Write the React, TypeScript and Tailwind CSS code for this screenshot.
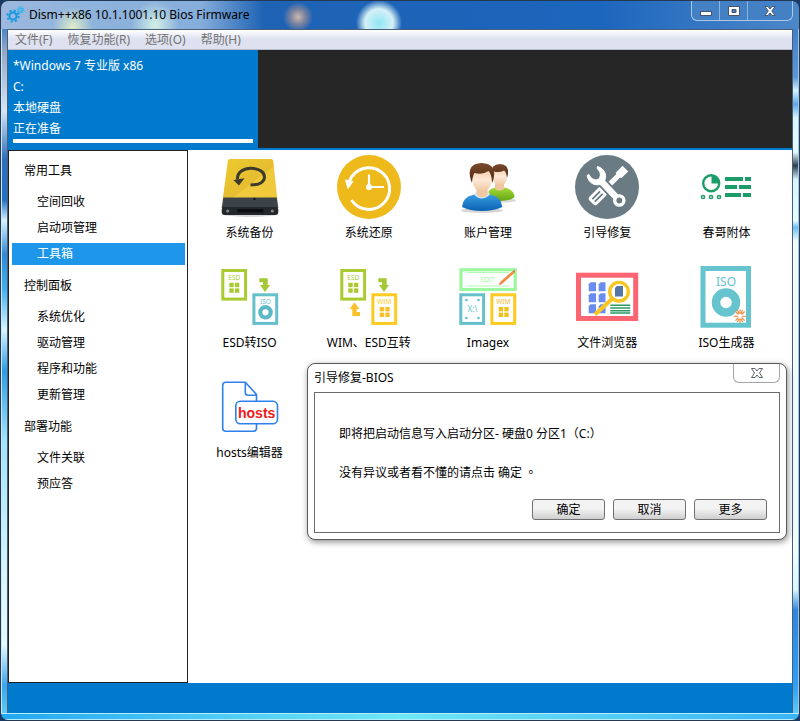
import type { ReactNode } from "react";

const windowMenus = ["文件(F)", "恢复功能(R)", "选项(O)", "帮助(H)"];

const sections = [
  { title: "常用工具", items: ["空间回收", "启动项管理", "工具箱"] },
  { title: "控制面板", items: ["系统优化", "驱动管理", "程序和功能", "更新管理"] },
  { title: "部署功能", items: ["文件关联", "预应答"] },
];

function Icon({ children }: { children: ReactNode }) {
  return (
    <svg className="size-16" viewBox="0 0 64 64" fill="none" aria-hidden="true">
      {children}
    </svg>
  );
}

function Panes({ x, y, color }: { x: number; y: number; color: string }) {
  return (
    <g fill={color}>
      <rect x={x} y={y} width="4.4" height="4.4" />
      <rect x={x + 5.6} y={y} width="4.4" height="4.4" />
      <rect x={x} y={y + 5.6} width="4.4" height="4.4" />
      <rect x={x + 5.6} y={y + 5.6} width="4.4" height="4.4" />
    </g>
  );
}

function Tile({ x, y, color, label, labelColor, children }: { x: number; y: number; color: string; label?: string; labelColor?: string; children?: ReactNode }) {
  return (
    <g>
      <rect x={x + 1.5} y={y + 1.5} width="22.8" height="28.6" fill="#fff" stroke={color} strokeWidth="3" />
      {label && (
        <text x={x + 13} y={y + 10.5} textAnchor="middle" fontSize="6.5" fontFamily="Noto Sans, sans-serif" fill={labelColor ?? color}>
          {label}
        </text>
      )}
      {children}
    </g>
  );
}

function GreenTurnArrow() {
  return <path d="M41.3 13.3H49.7V20H52L47 27L42 20H45V17.3H41.3Z" fill="#a4c935" />;
}

function BackupIcon() {
  return (
    <Icon>
      <defs>
        <linearGradient id="diskTop" x1="0" y1="0" x2="1" y2="1">
          <stop offset="0" stopColor="#ecca2e" />
          <stop offset="0.55" stopColor="#e6bd31" />
          <stop offset="0.56" stopColor="#efca3c" />
          <stop offset="1" stopColor="#f0c93a" />
        </linearGradient>
      </defs>
      <ellipse cx="32" cy="59" rx="28" ry="3" fill="#000" opacity="0.15" />
      <path d="M12 4H53Q55 4 55.3 6L59.5 46H4.5L9.8 6Q10 4 12 4Z" fill="url(#diskTop)" />
      <path d="M5.3 42.5H58.8L60.3 53H3.7Z" fill="#3c4348" />
      <rect x="3.7" y="52" width="56.6" height="8" rx="3" fill="#23282c" />
      <rect x="19.5" y="54" width="26" height="3.5" fill="#0c0e10" />
      <circle cx="9.7" cy="56" r="1.5" fill="#858a8d" />
      <circle cx="54.3" cy="56" r="1.5" fill="#858a8d" />
      <circle cx="36.5" cy="44" r="1.2" fill="#15191c" />
      <path d="M19.5 24.5C19 17 26 13.3 33 13.3C41 13.3 46.500 17 46.500 22C46.500 27 41 30 32.500 30" stroke="#3d3a2b" strokeWidth="3" />
      <path d="M15.300 25L26.500 23.300L21 30.500Z" fill="#3d3a2b" />
    </Icon>
  );
}

function RestoreIcon() {
  return (
    <Icon>
      <circle cx="32" cy="32" r="32" fill="#edb91b" />
      <path d="M12.500 26A20.800 20.800 0 1 1 14.500 45" stroke="#fff" strokeWidth="3" />
      <path d="M8.500 25L16 26.500L11 33.500Z" fill="#fff" stroke="#fff" />
      <path d="M32 19.500V32H47" stroke="#fff" strokeWidth="2.200" />
      <circle cx="32" cy="32" r="3" fill="#fff" />
    </Icon>
  );
}

function AccountsIcon() {
  return (
    <Icon>
      <defs>
        <linearGradient id="shirtBlue" x1="0" y1="0" x2="0" y2="1">
          <stop offset="0" stopColor="#3a9be0" />
          <stop offset="1" stopColor="#0a62b3" />
        </linearGradient>
        <linearGradient id="shirtGreen" x1="0" y1="0" x2="0" y2="1">
          <stop offset="0" stopColor="#a6da35" />
          <stop offset="1" stopColor="#63a616" />
        </linearGradient>
        <linearGradient id="skin" x1="0" y1="0" x2="0" y2="1">
          <stop offset="0" stopColor="#f1c9a3" />
          <stop offset="0.5" stopColor="#fde9d6" />
          <stop offset="1" stopColor="#f0c39c" />
        </linearGradient>
        <linearGradient id="hair" x1="0" y1="0" x2="0" y2="1">
          <stop offset="0" stopColor="#7b4a2a" />
          <stop offset="1" stopColor="#4f2a16" />
        </linearGradient>
      </defs>
      <ellipse cx="46" cy="45.500" rx="14" ry="2" fill="#000" opacity="0.15" />
      <path d="M30 44Q31 34 39 32.500H48Q57.500 34 58.700 42Q54 46 44 46Q34 46 30 44Z" fill="url(#shirtGreen)" />
      <path d="M39 27H48V34Q43.500 37 39 34Z" fill="#f0c6a0" />
      <ellipse cx="44" cy="21.500" rx="7" ry="9.500" fill="url(#skin)" />
      <path d="M35.700 19Q34.500 9 44 9Q53 9 52 19L51 23Q50.500 17 48 15.500Q43 18 38 16.500L37 23Z" fill="url(#hair)" />
      <ellipse cx="26" cy="55.500" rx="21" ry="2.500" fill="#000" opacity="0.16" />
      <path d="M6 52Q6.500 42 18 39.500H34Q45.500 42 46.400 52Q38 56 26 56Q14 56 6 52Z" fill="url(#shirtBlue)" />
      <path d="M18 39.500Q25.500 47.500 34 39.500L32 36H20Z" fill="#d4e9f8" />
      <path d="M20.500 33H31.500V40Q26 45 20.500 40Z" fill="#f2c9a4" />
      <ellipse cx="26" cy="25" rx="9.500" ry="11.800" fill="url(#skin)" />
      <path d="M14.800 25Q10 8.500 25.500 8Q41.500 8.500 37.300 25L36 28Q36 20 32.500 16Q27 20 18.500 18Q16.500 21 16 28Z" fill="url(#hair)" />
    </Icon>
  );
}

function RepairIcon() {
  return (
    <Icon>
      <circle cx="32" cy="32" r="32" fill="#6b7b83" />
      <g transform="rotate(45 32 32)">
        <rect x="29.500" y="10" width="5" height="19" fill="#fff" />
        <path d="M28 6H36V15L34 17H30L28 15Z" fill="#fff" />
        <rect x="26.500" y="36" width="11" height="18" rx="3" fill="#fff" />
        <path d="M30.200 40V51M33.800 40V51" stroke="#6b7b83" strokeWidth="1.700" />
      </g>
      <path d="M25 25L43 44" stroke="#6b7b83" strokeWidth="10" />
      <path d="M25 25L42 43" stroke="#fff" strokeWidth="6.500" />
      <path d="M22.500 11.500C30 13.500 33 21.500 28.500 27.500C22 32.500 13.500 29 12 20.500L14 19.500C16 24 19.500 25.500 23 24.500C26.500 22 26 16.500 22 13.500Z" fill="#fff" stroke="#fff" />
      <circle cx="44.300" cy="45.500" r="4.600" fill="#6b7b83" stroke="#fff" strokeWidth="3.400" />
    </Icon>
  );
}

function ChunGeIcon() {
  return (
    <Icon>
      <g stroke="#1b9c68">
        <circle cx="17.200" cy="28.200" r="8" strokeWidth="2.400" />
        <circle cx="9" cy="42" r="1.600" strokeWidth="1.500" />
        <circle cx="17" cy="42" r="1.600" strokeWidth="1.500" />
        <circle cx="25" cy="42" r="1.600" strokeWidth="1.500" />
      </g>
      <path d="M17.500 28.500V20A8.500 8.500 0 0 1 26 28.500Z" fill="#1b9c68" />
      <path d="M31 22H49V26H31ZM51 22H57V26H51ZM31 30H43V34H31ZM45 30H57V34H45ZM31 38H47V42H31ZM49 38H57V42H49Z" fill="#1b9c68" />
    </Icon>
  );
}

function EsdToIsoIcon() {
  return (
    <Icon>
      <Tile x={3.300} y={4} color="#a9cb2f" label="ESD">
        <Panes x={11.300} y={17.800} color="#a9cb2f" />
      </Tile>
      <GreenTurnArrow />
      <Tile x={34.400} y={28.300} color="#65c0cb" label="ISO">
        <circle cx="47.500" cy="47.300" r="5.200" stroke="#5bb9c7" strokeWidth="4.200" />
      </Tile>
    </Icon>
  );
}

function WimEsdIcon() {
  return (
    <Icon>
      <Tile x={3.300} y={4} color="#a9cb2f" label="ESD">
        <Panes x={11.300} y={17.800} color="#a9cb2f" />
      </Tile>
      <GreenTurnArrow />
      <path d="M17.500 37.500L22.500 44H19.700V47H23V51H15.300V44H12.500Z" fill="#fbc02a" />
      <Tile x={34.400} y={28.300} color="#fccb21" label="WIM">
        <Panes x={42.700} y={42} color="#fbc02a" />
      </Tile>
    </Icon>
  );
}

function ImagexIcon() {
  return (
    <Icon>
      <rect x="5" y="4.800" width="54.200" height="19.700" fill="#fff" stroke="#9df79f" strokeWidth="3.200" />
      <path d="M11 7.500H53M11 21H53" stroke="#9df79f" strokeWidth="0.800" />
      <text x="31.500" y="17" textAnchor="middle" fontSize="6.500" fontFamily="Noto Sans, sans-serif" fill="#9df79f">EDIT</text>
      <path d="M45 18L57.500 7" stroke="#f08a3e" strokeWidth="2.600" />
      <path d="M43 20L44 17L46 19ZM56.500 6L59 5L58.500 8Z" fill="#e5674e" />
      <Tile x={3.300} y={28.300} color="#65c0cb">
        <text x="16.500" y="47" textAnchor="middle" fontSize="8" fontFamily="Noto Sans, sans-serif" fill="#65c0cb">X:\</text>
        <g fill="#65c0cb">
          <circle cx="10.500" cy="35" r="1.300" />
          <circle cx="22.500" cy="35" r="1.300" />
          <circle cx="10.500" cy="53" r="1.300" />
          <circle cx="22.500" cy="53" r="1.300" />
        </g>
      </Tile>
      <Tile x={34.400} y={28.300} color="#fccb21" label="WIM" labelColor="#f5b72b">
        <Panes x={42.700} y={42} color="#f0c020" />
      </Tile>
    </Icon>
  );
}

function FileBrowserIcon() {
  return (
    <Icon>
      <rect x="3.500" y="10.200" width="57.200" height="43.300" fill="#fff" stroke="#fb6672" strokeWidth="5" />
      <g fill="#6a8cf0">
        {[17.300, 28.300, 39.300].map((y) => (
          <g key={y}>
            <path d={`M15.500 ${y}H21V${y + 9}H13.700V${y + 2}Z`} />
            <path d={`M25.700 ${y}H30.500V${y + 9}H23.700V${y + 2}Z`} />
          </g>
        ))}
      </g>
      <path d="M35.300 40.200H55.300M35.300 43H55.300M35.300 45.800H55.300M35.300 48H55.300" stroke="#2d9a64" strokeWidth="1.400" />
      <path d="M37.500 33.500L20 49.500" stroke="#f8c623" strokeWidth="4.200" />
      <circle cx="44" cy="26.700" r="9.300" fill="#fff" stroke="#f8c623" strokeWidth="3.400" />
      <path d="M42 21H48V31.500H40V23Z" fill="#5577a8" />
    </Icon>
  );
}

function IsoMakerIcon() {
  return (
    <Icon>
      <rect x="9" y="3.500" width="45.500" height="56.700" fill="#fff" stroke="#65c4cd" strokeWidth="5" />
      <text x="32" y="20.500" textAnchor="middle" fontSize="12" fontFamily="Noto Sans, sans-serif" fill="#65bfcf">ISO</text>
      <circle cx="32" cy="37.500" r="10" stroke="#65c4cd" strokeWidth="8.500" />
      <circle cx="46" cy="51" r="6" fill="#fff" />
      <path d="M46 44.500V49M46 53.500V58M39.500 51.200H44M48 51.200H52.500M41.500 46.500L44.500 49.500M47.500 52.500L50.700 55.700M50.700 46.500L47.500 49.500M44.500 52.500L41.500 55.700M43.500 45L45 48.500M48.500 45L47 48.500M43.500 57L45 54M48.500 57L47 54" stroke="#ed8a3a" strokeWidth="1.100" />
    </Icon>
  );
}

function HostsIcon() {
  return (
    <Icon>
      <path d="M27.300 7.300H8Q4.700 7.300 4.700 10.500V53.200Q4.700 56.200 8 56.200H35.500Q38.500 56.200 38.500 53V19.500L27.300 7.300V17.500Q27.300 20.300 30 20.300H38.500" fill="#fff" stroke="#2f80ed" strokeWidth="1.600" strokeLinejoin="round" />
      <rect x="17.800" y="26.300" width="41.700" height="22.500" rx="4.500" fill="#fff" stroke="#2f80ed" strokeWidth="1.600" />
      <text x="38.700" y="42.500" textAnchor="middle" fontSize="14" fontWeight="700" fontFamily="Liberation Sans, sans-serif" fill="#f01818">hosts</text>
    </Icon>
  );
}

const tools = [
  { label: "系统备份", icon: <BackupIcon /> },
  { label: "系统还原", icon: <RestoreIcon /> },
  { label: "账户管理", icon: <AccountsIcon /> },
  { label: "引导修复", icon: <RepairIcon /> },
  { label: "春哥附体", icon: <ChunGeIcon /> },
  { label: "ESD转ISO", icon: <EsdToIsoIcon /> },
  { label: "WIM、ESD互转", icon: <WimEsdIcon /> },
  { label: "Imagex", icon: <ImagexIcon /> },
  { label: "文件浏览器", icon: <FileBrowserIcon /> },
  { label: "ISO生成器", icon: <IsoMakerIcon /> },
  { label: "hosts编辑器", icon: <HostsIcon /> },
];

function TitleBar() {
  return (
    <header className="flex h-7 shrink-0 items-start justify-between bg-[radial-gradient(circle_at_297px_16px,#c9b9ae_0,#75809f_8px,transparent_15px),radial-gradient(circle_at_378px_22px,#8fe6f5_0,#d5f0f5_14px,transparent_23px),radial-gradient(circle_at_72px_26px,#dfeec8_0,transparent_20px),radial-gradient(circle_at_154px_24px,#d3f0e6_0,transparent_24px),linear-gradient(to_right,#9db8de,#8fb4dd_10%,#86aedb_25%,#1e62b4_33%,#1c66bd_75%,#4c87c8)] pl-1">
      <div className="flex items-center gap-1 pt-1">
        <svg className="size-5" viewBox="0 0 20 20" fill="none" aria-hidden="true">
          <circle cx="8" cy="11" r="3.600" stroke="#1e9ae0" strokeWidth="2.200" />
          <circle cx="8" cy="11" r="5.600" stroke="#1e9ae0" strokeWidth="2" strokeDasharray="2.200 2.200" />
          <circle cx="15.500" cy="5" r="1.800" stroke="#35b3ee" strokeWidth="1.500" />
          <circle cx="15.500" cy="5" r="3.200" stroke="#35b3ee" strokeWidth="1.300" strokeDasharray="1.300 1.200" />
        </svg>
        <h1 className="text-xs leading-5 text-black">Dism++x86 10.1.1001.10 Bios Firmware</h1>
      </div>
      <div className="mr-[6px] flex h-5 overflow-hidden rounded-b-md border border-t-0 border-[#a9c8ea] bg-[#4480c4] text-white">
        <button type="button" aria-label="最小化" className="flex w-7 items-center justify-center border-r border-[#8fb4dd]">
          <svg className="h-4 w-4" viewBox="0 0 16 16"><rect x="2.500" y="8.500" width="11" height="4" fill="#fff" stroke="#47566e" /></svg>
        </button>
        <button type="button" aria-label="最大化" className="flex w-7 items-center justify-center border-r border-[#8fb4dd]">
          <svg className="h-4 w-4" viewBox="0 0 16 16"><path d="M2.500 3.500H13.500V12.500H2.500ZM6 6.500V9.500H10V6.500Z" fill="#fff" fillRule="evenodd" stroke="#47566e" /></svg>
        </button>
        <button type="button" aria-label="关闭" className="flex w-11 items-center justify-center">
          <svg className="h-4 w-4" viewBox="0 0 16 16"><path d="M3 3.500H6L8 6L10 3.500H13L9.800 8L13 12.500H10L8 10L6 12.500H3L6.200 8Z" fill="#fff" stroke="#47566e" /></svg>
        </button>
      </div>
    </header>
  );
}

function BootDialog() {
  return (
    <section
      role="dialog"
      aria-labelledby="dialog-title"
      className="absolute top-[213px] right-[5px] w-[480px] rounded-lg border border-[#5a5a5a] bg-white px-[6px] pb-[6px] shadow-[1px_2px_6px_rgba(0,0,0,0.45)]"
    >
      <div className="flex h-7 items-start justify-between">
        <h2 id="dialog-title" className="pt-1 text-xs leading-5">引导修复-BIOS</h2>
        <button type="button" aria-label="关闭对话框" className="flex h-[19px] w-[47px] items-center justify-center rounded-b-md border border-t-0 border-[#a5a5a5]">
          <svg className="size-4" viewBox="0 0 16 16"><path d="M2.500 3.500H6L8 6L10 3.500H13.500L10.500 8L13.500 12.500H10L8 10L6 12.500H2.500L5.500 8Z" fill="#fff" stroke="#5c6470" /></svg>
        </button>
      </div>
      <div className="flex h-[141px] flex-col justify-between border border-[#6b6b6b] pt-[31px] pr-3 pb-3 pl-6 text-xs">
        <div className="flex flex-col gap-[18px] leading-5">
          <p>即将把启动信息写入启动分区- 硬盘0 分区1（C:）</p>
          <p>没有异议或者看不懂的请点击 确定<span className="font-['Noto_Sans_CJK_TC',sans-serif]"> 。</span></p>
        </div>
        <div className="flex justify-end gap-2">
          {["确定", "取消", "更多"].map((label) => (
            <button
              key={label}
              type="button"
              className="h-[21px] w-[73px] rounded-[3px] border border-[#707070] bg-linear-to-b from-[#f3f3f3] from-45% to-[#cfcfcf] leading-4"
            >
              {label}
            </button>
          ))}
        </div>
      </div>
    </section>
  );
}

export default function App() {
  return (
    <div className="min-h-screen bg-[#173a66] font-['Noto_Sans','Noto_Sans_CJK_SC',sans-serif] text-black">
      <div className="flex min-h-screen flex-col overflow-hidden rounded-lg border border-[#26384f]">
        <TitleBar />
        <div className="flex flex-1">
          <div className="w-[6px] shrink-0 border-l border-[#c8e6f5] bg-[linear-gradient(to_bottom,#4a86c8,#8fa6c8_3%,#d5e6f5_12%,#2e6fc0_19%,#2272c8_25%,#d8f2fa_28%,#2e8ad8_33%,#40b0f0_38%,#d8f6fc_44%,#2d9ce5_50%,#a0e4fa_60%,#d8f6fc_80%,#e8fafd_90%,#3aa6ee_96%,#5ccbf8)]" />
          <div className="flex min-w-0 flex-1 flex-col border-x border-t border-[#4a5f78] bg-white">
            <nav aria-label="菜单" className="flex h-5 shrink-0 items-center gap-[15px] border-b border-[#b8bccb] bg-linear-to-b from-white via-[#dde1f0] to-[#dde1f0] px-[7px]">
              {windowMenus.map((label) => (
                <button key={label} type="button" className="text-xs leading-5 text-[#737373]">
                  {label}
                </button>
              ))}
            </nav>
            <div className="flex h-[100px] shrink-0 border-b-2 border-[#007acc] bg-[#262626]">
              <div className="w-[250px] bg-[#007acc] px-[5px] pt-[5px] text-xs leading-[21px] text-white">
                <p>*Windows 7 专业版 x86</p>
                <p>C:</p>
                <p>本地硬盘</p>
                <p>正在准备</p>
                <div role="progressbar" aria-label="正在准备" className="h-1 bg-white" />
              </div>
            </div>
            <div className="flex flex-1">
              <nav aria-label="功能" className="flex w-[180px] shrink-0 flex-col gap-[10px] border border-[#222] pt-[9px] pr-[2px] pb-2 pl-[3px] text-xs leading-[22px]">
                {sections.map((section) => (
                  <section key={section.title}>
                    <h2 className="pl-3">{section.title}</h2>
                    <ul className="mt-[9px] flex flex-col gap-1">
                      {section.items.map((item) => (
                        <li key={item}>
                          <button
                            type="button"
                            className={`block h-[22px] w-full pl-[25px] text-left ${item === "工具箱" ? "bg-[#1e97ea] text-white" : ""}`}
                          >
                            {item}
                          </button>
                        </li>
                      ))}
                    </ul>
                  </section>
                ))}
              </nav>
              <main className="relative min-w-0 flex-1 bg-white pt-[5px] pr-[6px] pl-[2px]">
                <div className="grid grid-cols-5 gap-y-[23px]">
                  {tools.map((tool) => (
                    <button key={tool.label} type="button" className="flex flex-col items-center gap-[5px] text-xs leading-[18px]">
                      {tool.icon}
                      <span>{tool.label}</span>
                    </button>
                  ))}
                </div>
                <BootDialog />
              </main>
            </div>
            <footer className="h-[30px] shrink-0 bg-[#007acc]" />
          </div>
          <div className="w-[6px] shrink-0 border-r border-[#9fc4e6] bg-[linear-gradient(to_bottom,#4080c8,#5b95d6_7%,#d5f5fc_9%,#5fa8e8_11%,#d8f6fc_13%,#e5fafd_18%,#2c3f50_20%,#d8f6fc_22%,#e8fdff_28%,#6dbdf0_29%,#f0feff_31%,#f0feff_76%,#d8f6fc_82%,#2f86dc_85%,#2e9ff5_96%,#5ccbf8)]" />
        </div>
        <div className="h-[7px] shrink-0 border-y border-[#b5eefa] bg-linear-to-r from-[#22a8f0] via-[#6ee8fa] to-[#3ab4f4]" />
      </div>
    </div>
  );
}
